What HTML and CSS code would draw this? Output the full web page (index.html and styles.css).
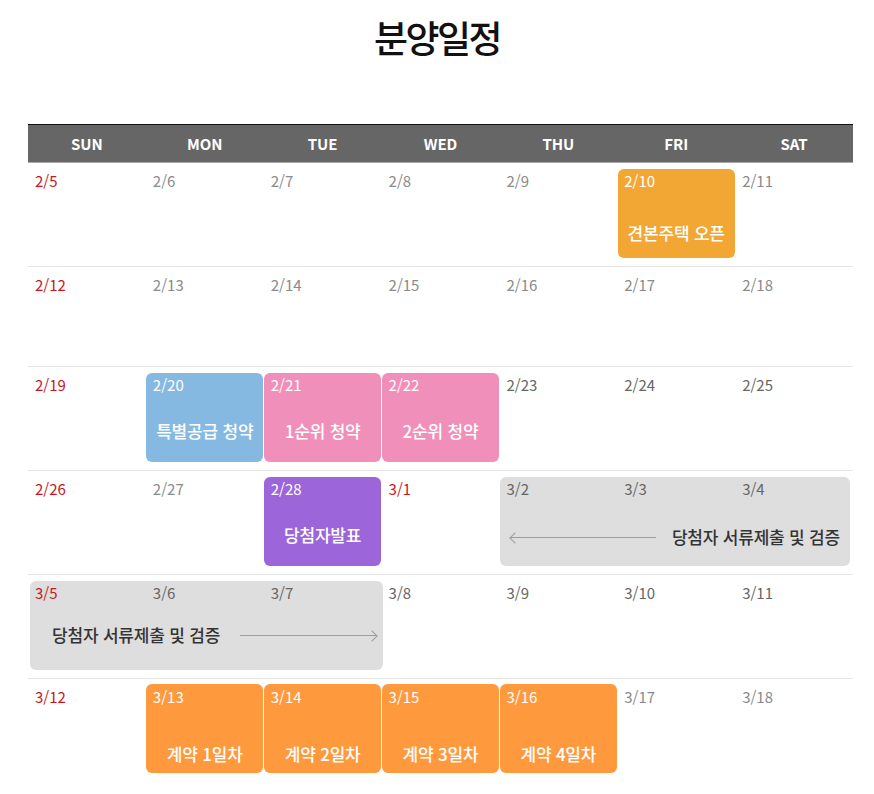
FILE: index.html
```html
<!DOCTYPE html>
<html lang="ko">
<head>
<meta charset="utf-8">
<title>분양일정</title>
<link rel="stylesheet" href="styles.css">
</head>
<body>
<h1 class="title">분양일정</h1>
<div class="calendar">
  <div class="cal-head">
    <div>SUN</div><div>MON</div><div>TUE</div><div>WED</div><div>THU</div><div>FRI</div><div>SAT</div>
  </div>

  <div class="week">
    <div class="event event--open c6"><span class="label">견본주택 오픈</span></div>
    <div class="day red c1">2/5</div>
    <div class="day c2">2/6</div>
    <div class="day c3">2/7</div>
    <div class="day c4">2/8</div>
    <div class="day c5">2/9</div>
    <div class="day on c6">2/10</div>
    <div class="day c7">2/11</div>
  </div>

  <div class="week week--empty">
    <div class="day red c1">2/12</div>
    <div class="day c2">2/13</div>
    <div class="day c3">2/14</div>
    <div class="day c4">2/15</div>
    <div class="day c5">2/16</div>
    <div class="day c6">2/17</div>
    <div class="day c7">2/18</div>
  </div>

  <div class="week">
    <div class="event event--blue c2"><span class="label">특별공급 청약</span></div>
    <div class="event event--pink c3"><span class="label">1순위 청약</span></div>
    <div class="event event--pink c4"><span class="label">2순위 청약</span></div>
    <div class="day red c1">2/19</div>
    <div class="day on c2">2/20</div>
    <div class="day on c3">2/21</div>
    <div class="day on c4">2/22</div>
    <div class="day dark c5">2/23</div>
    <div class="day dark c6">2/24</div>
    <div class="day dark c7">2/25</div>
  </div>

  <div class="week">
    <div class="event event--purple c3"><span class="label">당첨자발표</span></div>
    <div class="range range--back c5-7">
      <span class="arrow arrow--left"></span>
      <span class="label">당첨자 서류제출 및 검증</span>
    </div>
    <div class="day red c1">2/26</div>
    <div class="day c2">2/27</div>
    <div class="day on c3">2/28</div>
    <div class="day red c4">3/1</div>
    <div class="day dark c5">3/2</div>
    <div class="day dark c6">3/3</div>
    <div class="day dark c7">3/4</div>
  </div>

  <div class="week">
    <div class="range range--fwd c1-3">
      <span class="label">당첨자 서류제출 및 검증</span>
      <span class="arrow arrow--right"></span>
    </div>
    <div class="day red c1">3/5</div>
    <div class="day dark c2">3/6</div>
    <div class="day dark c3">3/7</div>
    <div class="day dark c4">3/8</div>
    <div class="day dark c5">3/9</div>
    <div class="day dark c6">3/10</div>
    <div class="day dark c7">3/11</div>
  </div>

  <div class="week week--last">
    <div class="event event--contract c2"><span class="label">계약 1일차</span></div>
    <div class="event event--contract c3"><span class="label">계약 2일차</span></div>
    <div class="event event--contract c4"><span class="label">계약 3일차</span></div>
    <div class="event event--contract c5"><span class="label">계약 4일차</span></div>
    <div class="day red c1">3/12</div>
    <div class="day on c2">3/13</div>
    <div class="day on c3">3/14</div>
    <div class="day on c4">3/15</div>
    <div class="day on c5">3/16</div>
    <div class="day c6">3/17</div>
    <div class="day c7">3/18</div>
  </div>
</div>
</body>
</html>
```

FILE: styles.css
```css
* { box-sizing: border-box; }

body {
  margin: 0;
  background: #fff;
  font-family: "Noto Sans CJK KR", "Noto Sans", sans-serif;
  color: #222;
}

.title {
  margin: 0 0 62px;
  padding-top: 12px;
  text-align: center;
  font-size: 37px;
  line-height: 50px;
  font-weight: 500;
  letter-spacing: -2.5px;
  color: #111;
}

.calendar {
  width: 825px;
  margin-left: 28px;
}

.cal-head {
  display: grid;
  grid-template-columns: repeat(7, 1fr);
  border-top: 1px solid #111;
  border-bottom: 1px solid #aaa;
  background: #666;
  height: 39px;
}

.cal-head div {
  text-align: center;
  color: #fff;
  font-weight: 700;
  font-size: 15px;
  line-height: 37px;
}

.week {
  display: grid;
  grid-template-columns: repeat(7, 1fr);
  grid-template-rows: 89px;
  padding: 6px 0 8px;
  border-bottom: 1px solid #e6e6e6;
}

.week--empty {
  grid-template-rows: 85px;
}

.week--last {
  border-bottom: none;
  padding-top: 5px;
}

.c1 { grid-column: 1; }
.c2 { grid-column: 2; }
.c3 { grid-column: 3; }
.c4 { grid-column: 4; }
.c5 { grid-column: 5; }
.c6 { grid-column: 6; }
.c7 { grid-column: 7; }
.c1-3 { grid-column: 1 / span 3; }
.c5-7 { grid-column: 5 / span 3; }

.day,
.event,
.range {
  grid-row: 1;
}

.day {
  padding: 2px 0 0 7px;
  font-size: 15px;
  line-height: 20px;
  color: #8a8a8a;
}

.week--last .day { padding-top: 3px; }

.day.red { color: #c8161d; }
.day.dark { color: #666; }
.day.on { color: #fff; }

.event {
  margin: 0 0.5px;
  border-radius: 6px;
  display: flex;
  justify-content: center;
  align-items: flex-start;
  padding-top: 46px;
}

.event .label,
.range .label {
  font-size: 17px;
  line-height: 24px;
  font-weight: 500;
  letter-spacing: -0.2px;
  white-space: nowrap;
}

.event .label { color: #fff; }

.event--open { background: #f2a735; padding-top: 52px; }
.event--blue { background: #85b9e2; }
.event--pink { background: #f08fb9; }
.event--purple { background: #9c66da; }
.event--contract { background: #fe9a3d; padding-top: 58px; }

.range {
  background: #dedede;
  border-radius: 6px;
  display: flex;
  align-items: center;
  align-self: start;
  height: 89px;
}

.range .label { color: #333; }

.range--back {
  margin: 0 3px 0 1px;
  padding: 48px 10px 17px 10px;
  gap: 16px;
}

.range--fwd {
  margin: 0 -1px 0 2px;
  padding: 42px 6px 23px 22px;
  gap: 20px;
}

.arrow {
  flex: 1;
  height: 1px;
  background: #9d9d9d;
  position: relative;
}

.arrow::before {
  content: "";
  position: absolute;
  top: -3px;
  width: 7px;
  height: 7px;
  border: 0 solid #9d9d9d;
  transform: rotate(45deg);
}

.arrow--left::before {
  left: 1px;
  border-left-width: 1px;
  border-bottom-width: 1px;
}

.arrow--right::before {
  right: 1px;
  border-top-width: 1px;
  border-right-width: 1px;
}
```
